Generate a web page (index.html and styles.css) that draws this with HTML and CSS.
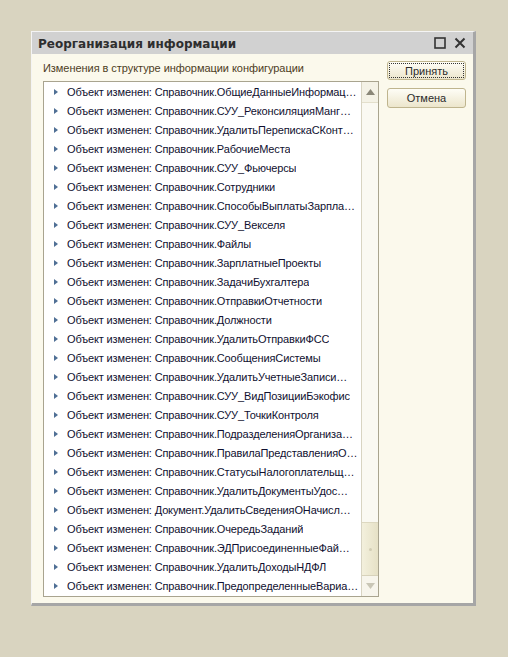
FILE: index.html
```html
<!DOCTYPE html>
<html lang="ru">
<head>
<meta charset="utf-8">
<link rel="stylesheet" href="styles.css">
<title>Реорганизация информации</title>
</head>
<body>
<div class="window">
  <div class="titlebar">
    <span class="title">Реорганизация информации</span>
    <span class="tb-icons">
      <svg class="tb-icon" width="12" height="12" viewBox="0 0 12 12"><rect x="1" y="1" width="10" height="10" fill="none" stroke="#333" stroke-width="1.6"/></svg>
      <svg class="tb-icon" width="12" height="12" viewBox="0 0 12 12"><path d="M1.5 1.5 L10.5 10.5 M10.5 1.5 L1.5 10.5" stroke="#333" stroke-width="2"/></svg>
    </span>
  </div>
  <div class="content">
    <div class="main">
      <div class="label">Изменения в структуре информации конфигурации</div>
      <div class="listbox">
        <ul class="list" id="list"></ul>
        <div class="scrollbar">
          <div class="sb-btn sb-up"><svg width="9" height="6" viewBox="0 0 9 6"><path d="M0 6 L4.5 0 L9 6 Z" fill="#8a8778"/></svg></div>
          <div class="sb-track"></div>
          <div class="sb-thumb"><span class="sb-dot"></span></div>
          <div class="sb-btn sb-down"><svg width="9" height="6" viewBox="0 0 9 6"><path d="M0 0 L4.5 6 L9 0 Z" fill="#c9c6b6"/></svg></div>
        </div>
      </div>
    </div>
    <div class="buttons">
      <button class="btn btn-default"><span class="focus">Принять</span></button>
      <button class="btn">Отмена</button>
    </div>
  </div>
</div>
<script src="app.js"></script>
</body>
</html>
```

FILE: app.js
```js
var items = [
  "Справочник.ОбщиеДанныеИнформац…",
  "Справочник.СУУ_РеконсиляцияМанг…",
  "Справочник.УдалитьПерепискаСКонт…",
  "Справочник.РабочиеМеста",
  "Справочник.СУУ_Фьючерсы",
  "Справочник.Сотрудники",
  "Справочник.СпособыВыплатыЗарпла…",
  "Справочник.СУУ_Векселя",
  "Справочник.Файлы",
  "Справочник.ЗарплатныеПроекты",
  "Справочник.ЗадачиБухгалтера",
  "Справочник.ОтправкиОтчетности",
  "Справочник.Должности",
  "Справочник.УдалитьОтправкиФСС",
  "Справочник.СообщенияСистемы",
  "Справочник.УдалитьУчетныеЗаписи…",
  "Справочник.СУУ_ВидПозицииБэкофис",
  "Справочник.СУУ_ТочкиКонтроля",
  "Справочник.ПодразделенияОрганиза…",
  "Справочник.ПравилаПредставленияО…",
  "Справочник.СтатусыНалогоплательщ…",
  "Справочник.УдалитьДокументыУдос…",
  "Документ.УдалитьСведенияОНачисл…",
  "Справочник.ОчередьЗаданий",
  "Справочник.ЭДПрисоединенныеФай…",
  "Справочник.УдалитьДоходыНДФЛ",
  "Справочник.ПредопределенныеВариа…"
];
var list = document.getElementById("list");
items.forEach(function (t) {
  var li = document.createElement("li");
  li.className = "row";
  var a = document.createElement("span");
  a.className = "arrow";
  var s = document.createElement("span");
  s.className = "text";
  s.textContent = "Объект изменен: " + t;
  li.appendChild(a);
  li.appendChild(s);
  list.appendChild(li);
});
```

FILE: styles.css
```css
html, body { margin: 0; padding: 0; }
body {
  background: #d9d4c0;
  width: 508px;
  height: 657px;
  padding: 31px 0 0 31px;
  box-sizing: border-box;
  font-family: "Liberation Sans", Arial, sans-serif;
}
.window {
  width: 445px;
  height: 575px;
  box-sizing: border-box;
  border-top: 1px solid #f4f4f4;
  border-left: 1px solid #f4f4f4;
  border-right: 3px solid #a6a6a6;
  border-bottom: 3px solid #a6a6a6;
  background: #fbf9ec;
  display: flex;
  flex-direction: column;
}
.titlebar {
  height: 22px;
  background: #d1d1d1;
  display: flex;
  align-items: center;
  padding: 0 7px 0 6px;
  flex: none;
}
.title {
  font-family: "DejaVu Sans", sans-serif;
  font-weight: bold;
  font-size: 12px;
  color: #2e2e2e;
  flex: 1;
  padding-top: 1px;
}
.tb-icons { display: flex; gap: 8px; align-items: center; }
.tb-icon { display: block; }
.content {
  flex: 1;
  display: flex;
  padding: 6px 7px 6px 10px;
  gap: 8px;
}
.main { display: flex; flex-direction: column; width: 337px; }
.label {
  font-size: 11px;
  color: #4d3d1e;
  height: 20px;
  line-height: 14px;
  padding-top: 1px;
  margin-left: 1px;
  letter-spacing: -0.05px;
}
.listbox {
  flex: 1;
  border: 1px solid #a9a48f;
  background: #fff;
  display: flex;
  margin-left: 1px;
}
.list {
  list-style: none;
  margin: 0;
  padding: 0;
  flex: 1;
  min-width: 0;
  overflow: hidden;
}
.row {
  height: 19px;
  display: flex;
  align-items: center;
  font-size: 11px;
  color: #101030;
}
.arrow {
  width: 0; height: 0;
  border-left: 4px solid #4f6f95;
  border-top: 3px solid transparent;
  border-bottom: 3px solid transparent;
  margin-left: 10px;
  margin-right: 9px;
  flex: none;
}
.text {
  white-space: nowrap;
  overflow: hidden;
  letter-spacing: -0.13px;
}
.scrollbar {
  width: 16px;
  border-left: 1px solid #d8d4c2;
  background: #faf9f2;
  display: flex;
  flex-direction: column;
  flex: none;
}
.sb-btn {
  height: 20px;
  display: flex;
  align-items: center;
  justify-content: center;
  flex: none;
}
.sb-up { background: #f4f2e6; border-bottom: 1px solid #e3dfcc; }
.sb-down { background: #f7f5ec; border-top: 1px solid #d7d2bb; }
.sb-track { flex: 1; }
.sb-thumb {
  height: 52px;
  background: linear-gradient(to right, #f3f0dd, #e6e1c6);
  border-top: 1px solid #ddd8c0;
  display: flex;
  align-items: center;
  justify-content: center;
  flex: none;
}
.sb-dot { width: 3px; height: 3px; border-radius: 50%; background: #d2cdb4; }
.buttons {
  display: flex;
  flex-direction: column;
  gap: 8px;
  padding-top: 1px;
}
.btn {
  width: 79px;
  height: 19px;
  border: 1px solid #bfb58e;
  border-radius: 3px;
  background: linear-gradient(#fefdf6, #ece6cc);
  font-family: "Liberation Sans", Arial, sans-serif;
  font-size: 11px;
  color: #2b2b2b;
  padding: 0;
  display: flex;
  align-items: center;
  justify-content: center;
}
.btn + .btn { height: 20px; }
.btn-default { padding: 1px; }
.focus {
  flex: 1;
  align-self: stretch;
  border: 1px dotted #333;
  display: flex;
  align-items: center;
  justify-content: center;
}
```
